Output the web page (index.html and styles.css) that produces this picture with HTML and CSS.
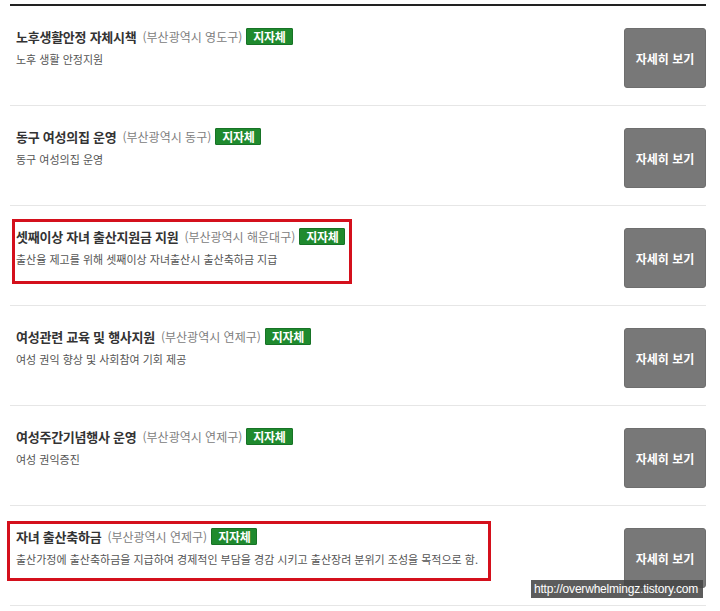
FILE: index.html
```html
<!DOCTYPE html>
<html lang="ko">
<head>
<meta charset="utf-8">
<title>지원사업 목록</title>
<link rel="stylesheet" href="styles.css">
</head>
<body>
<div class="page">
  <ul class="list">
    <li class="row">
      <div class="info">
        <div class="title-line"><span class="title">노후생활안정 자체시책</span><span class="region">(부산광역시 영도구)</span><span class="badge">지자체</span></div>
        <p class="desc">노후 생활 안정지원</p>
      </div>
      <a class="btn">자세히 보기</a>
    </li>
    <li class="row">
      <div class="info">
        <div class="title-line"><span class="title">동구 여성의집 운영</span><span class="region">(부산광역시 동구)</span><span class="badge">지자체</span></div>
        <p class="desc">동구 여성의집 운영</p>
      </div>
      <a class="btn">자세히 보기</a>
    </li>
    <li class="row">
      <div class="info">
        <div class="title-line"><span class="title">셋째이상 자녀 출산지원금 지원</span><span class="region">(부산광역시 해운대구)</span><span class="badge">지자체</span></div>
        <p class="desc">출산율 제고를 위해 셋째이상 자녀출산시 출산축하금 지급</p>
      </div>
      <a class="btn">자세히 보기</a>
      <span class="mark mark-a"></span>
    </li>
    <li class="row">
      <div class="info">
        <div class="title-line"><span class="title">여성관련 교육 및 행사지원</span><span class="region">(부산광역시 연제구)</span><span class="badge">지자체</span></div>
        <p class="desc">여성 권익 향상 및 사회참여 기회 제공</p>
      </div>
      <a class="btn">자세히 보기</a>
    </li>
    <li class="row">
      <div class="info">
        <div class="title-line"><span class="title">여성주간기념행사 운영</span><span class="region">(부산광역시 연제구)</span><span class="badge">지자체</span></div>
        <p class="desc">여성 권익증진</p>
      </div>
      <a class="btn">자세히 보기</a>
    </li>
    <li class="row">
      <div class="info">
        <div class="title-line"><span class="title">자녀 출산축하금</span><span class="region">(부산광역시 연제구)</span><span class="badge">지자체</span></div>
        <p class="desc">출산가정에 출산축하금을 지급하여 경제적인 부담을 경감 시키고 출산장려 분위기 조성을 목적으로 함.</p>
      </div>
      <a class="btn">자세히 보기</a>
      <span class="mark mark-b"></span>
    </li>
  </ul>
  <div class="watermark">http://overwhelmingz.tistory.com</div>
</div>
</body>
</html>
```

FILE: styles.css
```css
* { box-sizing: border-box; }
html, body { margin: 0; padding: 0; background: #fff; }
body {
  font-family: "Noto Sans CJK KR", "Noto Sans", sans-serif;
  color: #333;
}
.page {
  position: relative;
  width: 720px;
  height: 611px;
  overflow: hidden;
  padding-top: 4px;
}
.list {
  list-style: none;
  margin: 0 0 0 10px;
  padding: 0;
  width: 696px;
  border-top: 2px solid #222;
}
.row {
  position: relative;
  display: flex;
  align-items: flex-start;
  justify-content: space-between;
  height: 100px;
  padding: 22px 0 0 6px;
  border-bottom: 1px solid #e6e6e6;
}
.info { display: flex; flex-direction: column; }
.title-line {
  display: flex;
  align-items: center;
  height: 16px;
  white-space: nowrap;
}
.title {
  font-size: 13px;
  font-weight: 700;
  letter-spacing: -0.25px;
  color: #333;
}
.region {
  margin-left: 6px;
  font-size: 12px;
  color: #808080;
}
.badge {
  margin-left: 4px;
  padding: 1px 6px;
  font-size: 12px;
  line-height: 13px;
  font-weight: 700;
  letter-spacing: -0.3px;
  color: #fff;
  background: #1f8a2e;
  border: 1px solid #177326;
  border-radius: 1px;
}
.desc {
  margin: 8px 0 0;
  font-size: 11px;
  line-height: 14px;
  color: #555;
  white-space: nowrap;
}
.btn {
  display: flex;
  align-items: center;
  justify-content: center;
  width: 82px;
  height: 60px;
  background: #787878;
  border: 1px solid #6e6e6e;
  border-radius: 3px;
  color: #fff;
  font-size: 12px;
  font-weight: 700;
}
.mark {
  position: absolute;
  border: 3px solid #d4101c;
  pointer-events: none;
}
.mark-a { left: 2px; top: 13px; width: 340px; height: 65px; }
.mark-b { left: -3px; top: 15px; width: 484px; height: 60px; }
.watermark {
  position: absolute;
  left: 531px;
  top: 580px;
  width: 172px;
  height: 18px;
  padding-left: 3px;
  background: rgba(70, 70, 70, 0.88);
  color: #fff;
  font-family: "Liberation Sans", Arial, sans-serif;
  font-size: 12px;
  line-height: 18px;
  letter-spacing: -0.2px;
  white-space: nowrap;
}
```
